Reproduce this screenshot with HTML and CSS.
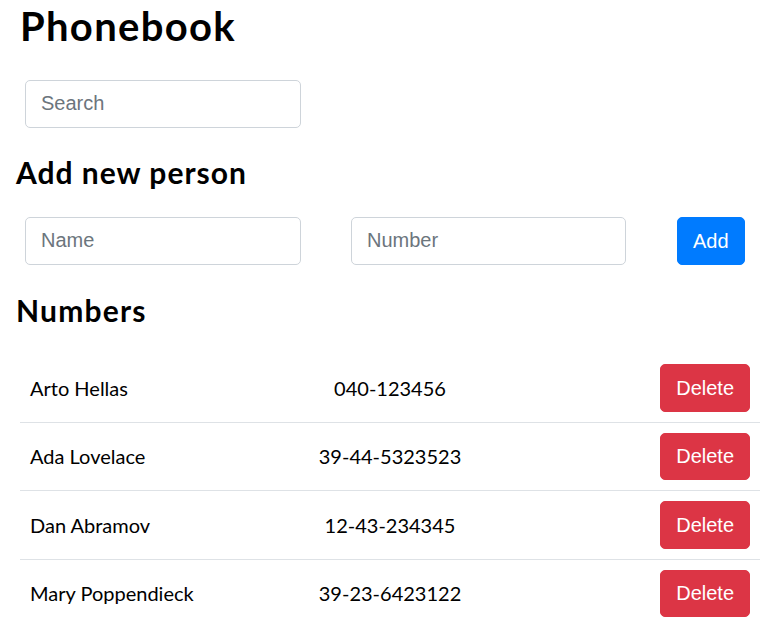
FILE: index.html
```html
<!DOCTYPE html>
<html lang="en">
<head>
<meta charset="utf-8">
<title>Phonebook</title>
<link rel="stylesheet" href="styles.css">
</head>
<body>
<div class="page">
  <h1 class="title">Phonebook</h1>
  <div class="search-row">
    <input class="field" type="text" placeholder="Search">
  </div>
  <h2 class="section section-add">Add new person</h2>
  <form class="add-form">
    <input class="field" type="text" placeholder="Name">
    <input class="field" type="text" placeholder="Number">
    <button class="btn btn-primary" type="button">Add</button>
  </form>
  <h2 class="section section-numbers">Numbers</h2>
  <table class="numbers">
    <tbody>
      <tr><td class="c-name">Arto Hellas</td><td class="c-number">040-123456</td><td class="c-action"><button class="btn btn-danger" type="button">Delete</button></td></tr>
      <tr><td class="c-name">Ada Lovelace</td><td class="c-number">39-44-5323523</td><td class="c-action"><button class="btn btn-danger" type="button">Delete</button></td></tr>
      <tr><td class="c-name">Dan Abramov</td><td class="c-number">12-43-234345</td><td class="c-action"><button class="btn btn-danger" type="button">Delete</button></td></tr>
      <tr><td class="c-name">Mary Poppendieck</td><td class="c-number">39-23-6423122</td><td class="c-action"><button class="btn btn-danger" type="button">Delete</button></td></tr>
    </tbody>
  </table>
</div>
</body>
</html>
```
FILE: styles.css
```css
* { box-sizing: border-box; }
html, body { margin: 0; padding: 0; background: #fff; }
body {
  font-family: "Segoe UI", Lato, "Noto Sans", sans-serif;
  color: #000;
  font-size: 20px;
}
.page { padding: 2px 5px 0 16px; }
.title {
  margin: 0 0 0 4px;
  font-size: 40px;
  line-height: 48px;
  font-weight: 700;
  letter-spacing: 1.3px;
}
.search-row { margin: 30px 0 0 9px; }
.field {
  display: block;
  width: 276px;
  height: 47.5px;
  padding: 0 15px;
  font-family: "Liberation Sans", Arial, sans-serif;
  font-size: 20px;
  color: #495057;
  background: #fff;
  border: 1px solid #ced4da;
  border-radius: 5px;
  outline: none;
}
.field::placeholder { color: #6c757d; }
.section {
  margin: 0;
  font-size: 30px;
  line-height: 36px;
  font-weight: 700;
  letter-spacing: 1px;
}
.section-add { margin-top: 26.5px; }
.section-numbers { margin-top: 27.5px; letter-spacing: 1.2px; }
.add-form {
  display: flex;
  align-items: center;
  gap: 50px;
  margin: 27px 0 0 9px;
}
.add-form .field:nth-child(2) { width: 275px; }
.add-form .btn { margin-left: 1px; }
.btn {
  display: inline-block;
  height: 47.5px;
  padding: 0 15px;
  font-family: "Liberation Sans", Arial, sans-serif;
  font-size: 20px;
  line-height: 1;
  color: #fff;
  border: 1px solid transparent;
  border-radius: 5px;
  cursor: pointer;
}
.btn-primary { background: #007bff; border-color: #007bff; }
.btn-danger { background: #dc3545; border-color: #dc3545; }
.numbers {
  margin: 26px 0 0 4px;
  width: 740px;
  border-collapse: collapse;
  table-layout: fixed;
}
.numbers td {
  padding: 10px;
  vertical-align: middle;
  line-height: 30px;
  border-top: 1px solid #dee2e6;
}
.numbers tr:first-child td { border-top: 0; }
.c-name { width: 250px; text-align: left; }
.c-number { width: 240px; text-align: center; }
.c-action { text-align: right; }
```
